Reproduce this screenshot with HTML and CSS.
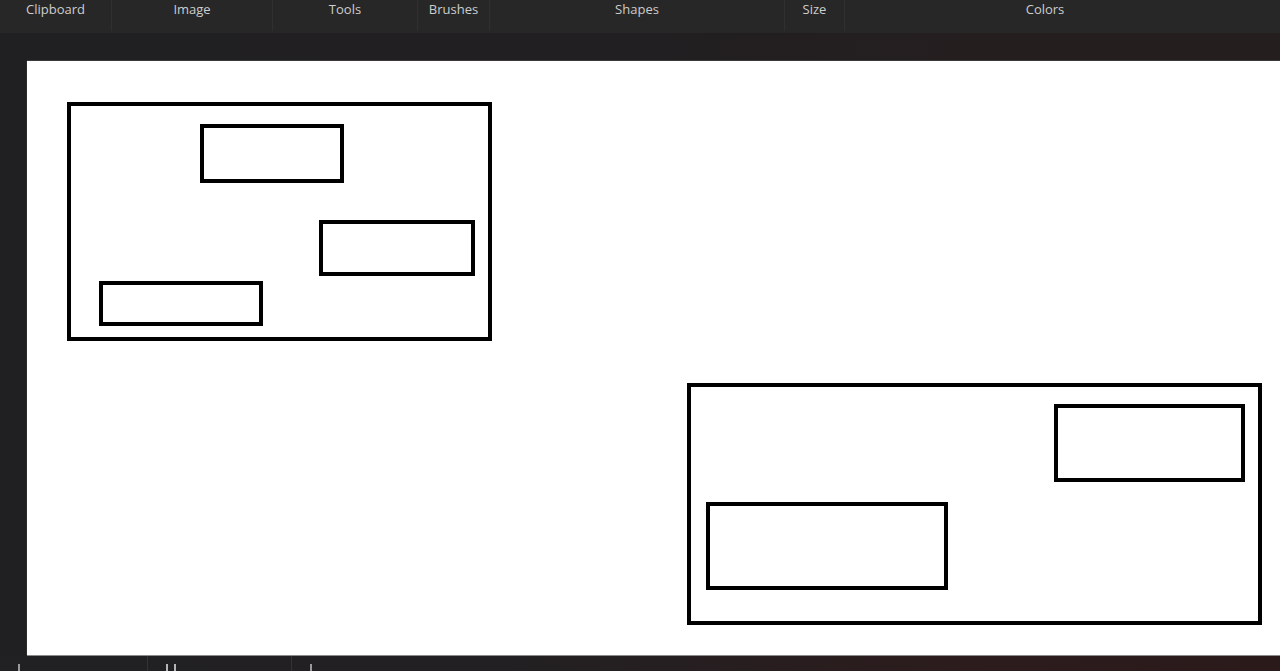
FILE: index.html
```html
<!DOCTYPE html>
<html lang="en">
<head>
    <meta charset="UTF-8">
    <meta name="viewport" content="width=device-width, initial-scale=1.0">
    <title>Untitled - Paint</title>
    <link rel="stylesheet" href="styles.css">
</head>
<body>

    <!-- Ribbon group labels -->
    <nav class="ribbon">
        <div class="group g-clipboard">Clipboard</div>
        <div class="group g-image">Image</div>
        <div class="group g-tools">Tools</div>
        <div class="group g-brushes">Brushes</div>
        <div class="group g-shapes">Shapes</div>
        <div class="group g-size">Size</div>
        <div class="group g-colors">Colors</div>
    </nav>

    <main class="workspace">
        <div class="canvas">
            <svg class="drawing" width="1253" height="594" viewBox="0 0 1253 594">
                <g fill="none" stroke="#000" stroke-width="4">
                    <rect x="42" y="43" width="421" height="235" />
                    <rect x="175" y="65" width="140" height="55" />
                    <rect x="294" y="161" width="152" height="52" />
                    <rect x="74" y="222" width="160" height="41" />

                    <rect x="662" y="324" width="571" height="238" />
                    <rect x="1029" y="345" width="187" height="74" />
                    <rect x="681" y="443" width="238" height="84" />
                </g>
            </svg>
        </div>
    </main>

    <footer class="statusbar">
        <div class="status-item s-pos"><span class="glyph"></span></div>
        <div class="status-item s-sel"><span class="glyph wide"></span></div>
        <div class="status-item s-size"><span class="glyph"></span></div>
    </footer>

</body>
</html>
```

FILE: styles.css
```css
* {
    box-sizing: border-box;
}

html, body {
    margin: 0;
    height: 100%;
}

body {
    display: flex;
    flex-direction: column;
    overflow: hidden;
    background: linear-gradient(90deg, #201f21 0%, #211f21 50%, #251e1f 80%, #241e1e 100%);
    font-family: "Open Sans", "Noto Sans", sans-serif;
    color: #cdcdcd;
}

/* Ribbon */
.ribbon {
    display: flex;
    height: 33px;
    flex-shrink: 0;
    background: #272727;
}

.group {
    font-size: 13px;
    line-height: 19px;
    text-align: center;
    border-right: 1px solid #303030;
    height: 31px;
}

.g-clipboard { width: 112px; }
.g-image { width: 161px; }
.g-tools { width: 145px; }
.g-brushes { width: 72px; }
.g-shapes { width: 295px; }
.g-size { width: 60px; }
.g-colors { width: 400px; border-right: none; }

/* Workspace */
.workspace {
    flex: 1;
    padding: 28px 0 0 27px;
    min-height: 0;
}

.canvas {
    height: 594px;
    background: #fff;
    box-shadow: 0 -1px 0 #3a3a3a, -1px 0 0 #2c2c2c, 0 1px 0 #8a8a8a;
    overflow: hidden;
}

.drawing {
    display: block;
}

/* Status bar */
.statusbar {
    display: flex;
    height: 15px;
    flex-shrink: 0;
    margin-top: 1px;
    background: linear-gradient(90deg, #212022 0%, #222022 40%, #2c1c1d 75%, #2a1a1a 100%);
}

.status-item {
    height: 100%;
    border-right: 1px solid #333;
    padding: 8px 0 0 18px;
}

.s-pos { width: 148px; }
.s-sel { width: 144px; }
.s-size { width: 200px; border-right: none; }

.glyph {
    display: block;
    width: 4px;
    height: 8px;
    border-left: 2px solid #9a9a9a;
}

.glyph.wide {
    width: 10px;
    border-left: 2px solid #b5b5b5;
    border-right: 2px solid #b5b5b5;
}
```
